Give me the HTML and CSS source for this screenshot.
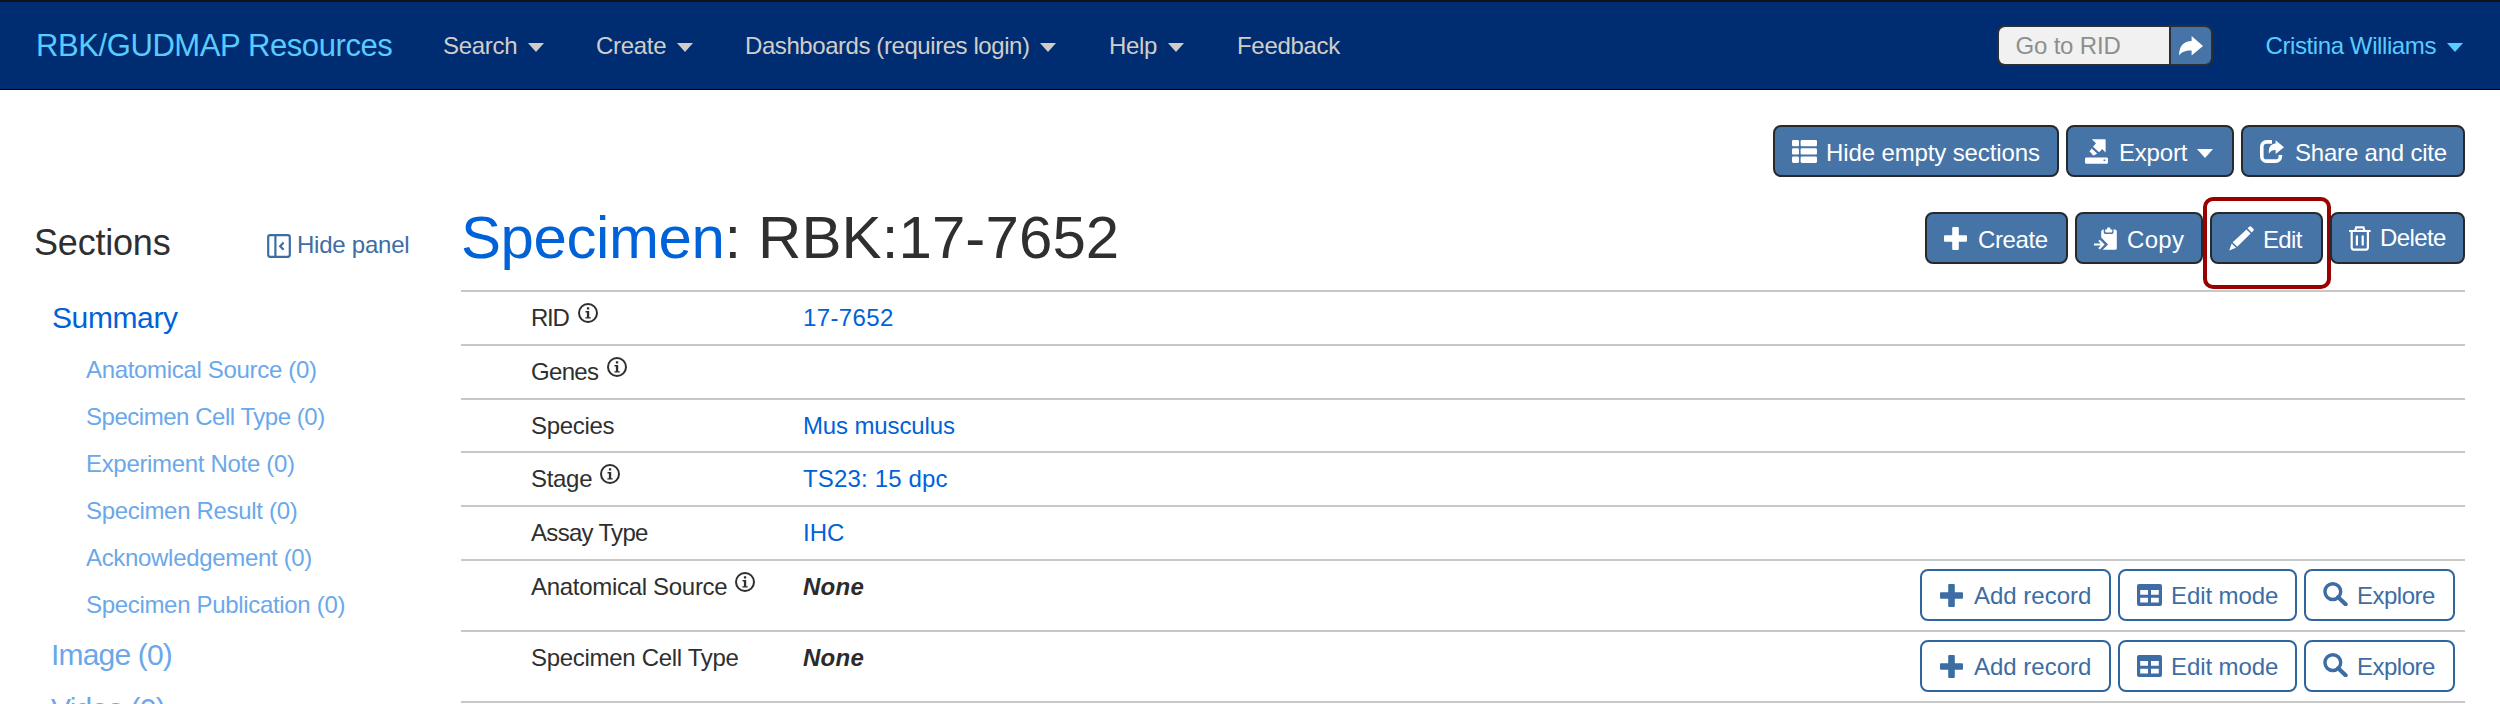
FILE: index.html
```html
<!DOCTYPE html>
<html lang="en">
<head>
<meta charset="utf-8">
<title>Specimen: RBK:17-7652</title>
<link rel="stylesheet" href="styles.css">
</head>
<body>
<svg class="defs" width="0" height="0">
  <symbol id="i-list" viewBox="0 0 25 23"><g fill="currentColor"><rect x="0" y="0" width="7" height="6.3" rx="1.3"/><rect x="0" y="8.3" width="7" height="6.3" rx="1.3"/><rect x="0" y="16.6" width="7" height="6.3" rx="1.3"/><rect x="8.6" y="0" width="16.4" height="6.3" rx="1.3"/><rect x="8.6" y="8.3" width="16.4" height="6.3" rx="1.3"/><rect x="8.6" y="16.6" width="16.4" height="6.3" rx="1.3"/></g></symbol>
  <symbol id="i-export" viewBox="0 0 23 25"><path fill="currentColor" d="M6.800.3h13.800v13.200l-3.400-3.400-3.100 3.100-6.100-5.400L11 4.200zM6.600 9.400l5.600 5-3.400 2-1.800-.8-.6-1.500-2-1.300z"/><path fill="currentColor" fill-rule="evenodd" d="M.8 18.600h21.400l.8.8v4.600l-.8.8H.8l-.8-.8v-4.600zM18.600 20.600v1.400h1.700v-1.400z"/></symbol>
  <symbol id="i-share" viewBox="0 0 24 23"><path fill="none" stroke="currentColor" stroke-width="3.600" d="M12 1.900H6.500a4.700 4.700 0 0 0-4.700 4.700v9.800a4.700 4.700 0 0 0 4.700 4.700h9.200a4.700 4.700 0 0 0 4.700-4.700v-1.400"/><path fill="currentColor" d="M15.600.2v3.400C10.500 4.100 8.300 7.600 8.900 13.700c1.600-3.100 3.700-3.800 6.700-3.800v4L24 7.200z"/></symbol>
  <symbol id="i-plus" viewBox="0 0 23 23"><path fill="currentColor" d="M9.200 0h4.600q1 0 1 1v7.200h7.200q1 0 1 1v4.600q0 1-1 1h-7.200v7.200q0 1-1 1H9.200q-1 0-1-1v-7.200H1q-1 0-1-1V9.200q0-1 1-1h7.200V1q0-1 1-1z"/></symbol>
  <symbol id="i-copy" viewBox="0 0 23 23"><path fill="currentColor" d="M8.700 2.600h1v2.700q0 1.600 1.600 1.600h6.600q1.600 0 1.600-1.600V2.600h1.600q1.700 0 1.700 1.700v17q0 1.500-1.500 1.500H8.700l5.400-5.300L7.200 10.500V4.300z"/><path fill="currentColor" d="M11.200 2.400h1.500q.4-2.200 2-2.200t2 2.200h1.600v2q0 1-1 1h-5.100q-1 0-1-1z"/><path fill="none" stroke="currentColor" stroke-width="2" d="M0 17.600h8M5 13.400l4.200 4.200L5 21.800"/></symbol>
  <symbol id="i-pencil" viewBox="0 0 25 25"><path fill="currentColor" d="M17.500 3.400l4.100 4.100L8.200 20.700l-4.500-4.500zM2.700 17.500l4.300 4.300L.2 24.600zM18.600 2.300L20.200.7q1-1 2 0l2.100 2.100q1 1 0 2l-1.600 1.600z"/></symbol>
  <symbol id="i-trash" viewBox="0 0 22 25"><path fill="none" stroke="currentColor" stroke-width="2.200" d="M0 5h21.600M6 5L7.200 1.400h7.200L15.600 5M2.700 5v16.600q0 2 2 2h12.200q2 0 2-2V5M7.900 9.400v10M13.700 9.400v10"/></symbol>
  <symbol id="i-table" viewBox="0 0 25 22"><path fill="currentColor" fill-rule="evenodd" d="M2 0h21q2 0 2 2v18q0 2-2 2H2q-2 0-2-2V2q0-2 2-2zM3.200 6v4.800h7.800V6zM14 6v4.800h7.800V6zM3.200 13.800v4.800h7.800v-4.800zM14 13.800v4.800h7.800v-4.800z"/></symbol>
  <symbol id="i-search" viewBox="0 0 25 24"><g fill="none" stroke="currentColor"><circle cx="9.800" cy="9.600" r="7.900" stroke-width="3.400"/><path d="M15.200 15.200l7.400 7" stroke-width="4.200" stroke-linecap="round"/></g></symbol>
  <symbol id="i-panel" viewBox="0 0 24 24"><path fill="none" stroke="currentColor" stroke-width="2.200" d="M3.200 1.200h17.600q2 0 2 2v17.600q0 2-2 2H3.200q-2 0-2-2V3.200q0-2 2-2zM8.400 1v22M16.600 8.600l-3.400 3.600 3.400 3.600"/></symbol>
  <symbol id="i-go" viewBox="0 0 24 20"><path fill="currentColor" d="M12.600 0v5C4.500 5.300.2 10 0 19.500 2.800 15.800 6.300 14.400 12.600 14.500v5L24 9.900z"/></symbol>
  <symbol id="i-info" viewBox="0 0 20 20"><circle cx="10" cy="10" r="9" fill="none" stroke="currentColor" stroke-width="2"/><path fill="currentColor" d="M8.900 4.300h2.300v2.300H8.900zM7.500 8h3.700v6.200h1.500v1.400H7.400v-1.400h1.500V9.400H7.500z"/></symbol>
</svg>

<header class="navbar">
  <a class="brand">RBK/GUDMAP Resources</a>
  <nav class="menu">
    <a class="menu-item">Search<i class="caret"></i></a>
    <a class="menu-item">Create<i class="caret"></i></a>
    <a class="menu-item tight">Dashboards (requires login)<i class="caret"></i></a>
    <a class="menu-item">Help<i class="caret"></i></a>
    <a class="menu-item">Feedback</a>
  </nav>
  <form class="goto">
    <span class="goto-field">Go to RID</span>
    <span class="goto-button"><svg width="24" height="20"><use href="#i-go"/></svg></span>
  </form>
  <a class="user">Cristina Williams<i class="caret"></i></a>
</header>

<div class="page">
  <aside class="sidebar">
    <div class="sidebar-head">
      <h2>Sections</h2>
      <a class="hide-panel"><svg width="24" height="24"><use href="#i-panel"/></svg>Hide panel</a>
    </div>
    <a class="toc-main active">Summary</a>
    <div class="toc-sub">
      <a>Anatomical Source (0)</a>
      <a class="tight">Specimen Cell Type (0)</a>
      <a>Experiment Note (0)</a>
      <a>Specimen Result (0)</a>
      <a>Acknowledgement (0)</a>
      <a>Specimen Publication (0)</a>
    </div>
    <a class="toc-main">Image (0)</a>
    <a class="toc-main">Video (0)</a>
  </aside>

  <main class="record">
    <div class="toolbar">
      <a class="btn w-hide"><svg width="25" height="23"><use href="#i-list"/></svg><span>Hide empty sections</span></a>
      <a class="btn w-export"><svg width="23" height="25"><use href="#i-export"/></svg><span>Export</span><i class="caret"></i></a>
      <a class="btn w-share"><svg width="24" height="23"><use href="#i-share"/></svg><span>Share and cite</span></a>
    </div>
    <div class="title-row">
      <h1><a>Specimen</a>: RBK:17-7652</h1>
      <div class="toolbar">
        <a class="btn w-create"><svg width="23" height="23"><use href="#i-plus"/></svg><span>Create</span></a>
        <a class="btn w-copy"><svg width="23" height="23"><use href="#i-copy"/></svg><span>Copy</span></a>
        <a class="btn w-edit"><svg width="25" height="25"><use href="#i-pencil"/></svg><span>Edit</span><b class="highlight"></b></a>
        <a class="btn w-delete"><svg width="22" height="25"><use href="#i-trash"/></svg><span>Delete</span></a>
      </div>
    </div>
    <div class="fields">
      <div class="row"><div class="key k-rid">RID<svg width="20" height="20"><use href="#i-info"/></svg></div><a class="value digits">17-7652</a></div>
      <div class="row"><div class="key k-genes">Genes<svg width="20" height="20"><use href="#i-info"/></svg></div></div>
      <div class="row"><div class="key">Species</div><a class="value">Mus musculus</a></div>
      <div class="row"><div class="key">Stage<svg width="20" height="20"><use href="#i-info"/></svg></div><a class="value stage">TS23: 15 dpc</a></div>
      <div class="row"><div class="key k-assay">Assay Type</div><a class="value ihc">IHC</a></div>
      <div class="row tall"><div class="key">Anatomical Source<svg width="20" height="20"><use href="#i-info"/></svg></div><div class="value none">None</div>
        <div class="actions">
          <a class="btn outline w-add"><svg width="23" height="23"><use href="#i-plus"/></svg><span>Add record</span></a>
          <a class="btn outline w-mode"><svg width="25" height="22"><use href="#i-table"/></svg><span>Edit mode</span></a>
          <a class="btn outline w-explore"><svg width="25" height="24"><use href="#i-search"/></svg><span>Explore</span></a>
        </div></div>
      <div class="row tall last"><div class="key">Specimen Cell Type</div><div class="value none">None</div>
        <div class="actions">
          <a class="btn outline w-add"><svg width="23" height="23"><use href="#i-plus"/></svg><span>Add record</span></a>
          <a class="btn outline w-mode"><svg width="25" height="22"><use href="#i-table"/></svg><span>Edit mode</span></a>
          <a class="btn outline w-explore"><svg width="25" height="24"><use href="#i-search"/></svg><span>Explore</span></a>
        </div></div>
    </div>
  </main>
</div>
</body>
</html>
```
FILE: styles.css
```css
* { box-sizing: border-box; }
html, body { margin: 0; height: 704px; overflow: hidden; background: #fff; }
body {
  font: 24px/28px "Liberation Sans", Arial, sans-serif;
  letter-spacing: -0.3px;
  color: #2f2f2f;
  white-space: nowrap;
}
.defs { display: block; position: absolute; }
svg { flex: none; display: block; }
h1, h2 { margin: 0; font-weight: 400; }

.caret {
  flex: none;
  width: 0;
  height: 0;
  border: 8.500px solid transparent;
  border-top: 9px solid currentColor;
  border-bottom: 0;
}

/* top bar */
.navbar {
  display: flex;
  align-items: center;
  height: 90px;
  padding: 0 37px 0 36px;
  background: #002d72;
  border-top: 2px solid #101418;
  border-bottom: 1px solid #000010;
}
.brand { width: 407px; font-size: 31px; line-height: 36px; letter-spacing: -0.41px; color: #5bcaff; }
.menu { display: grid; grid-template-columns: 153px 149px 364px 128px auto; color: #d0cdca; }
.menu-item, .user { display: flex; align-items: center; gap: 11px; }
.menu .caret, .user .caret { margin-top: 4px; }
.menu-item.tight { letter-spacing: -0.43px; gap: 10px; }
.goto { display: flex; width: 216px; height: 41px; margin: 0 52px 0 auto; border: 2px solid #2b2f33; border-radius: 8px; overflow: hidden; }
.goto-field { flex: none; width: 170px; padding: 5px 0 0 16px; background: #f1f1f1; color: #8e8e8e; letter-spacing: -0.17px; }
.goto-button { flex: 1; display: flex; align-items: center; justify-content: center; background: #4674a7; border-left: 2px solid #2b2f33; color: #fff; }
.user { color: #5bcaff; letter-spacing: -0.4px; gap: 11px; }

/* page columns */
.page { display: flex; height: 614px; overflow: hidden; }
.sidebar { width: 461px; padding: 133px 0 0 34px; }
.sidebar-head { display: flex; height: 68px; }
.sidebar h2 { width: 233px; font-size: 36px; line-height: 40px; letter-spacing: -0.2px; }
.hide-panel { display: flex; align-items: flex-start; gap: 6px; padding-top: 8px; color: #3d6da3; letter-spacing: -0.24px; }
.hide-panel svg { margin-top: 3px; }
.toc-main { display: block; padding-left: 17px; font-size: 30px; line-height: 54px; letter-spacing: -0.82px; color: #6ba8ea; }
.toc-main.active { padding-left: 18px; color: #0062d8; letter-spacing: -0.39px; padding-bottom: 2px; }
.toc-sub { padding-left: 52px; height: 281px; color: #6ba8ea; letter-spacing: -0.32px; }
.toc-sub a { display: block; line-height: 46.950px; }
.toc-sub .tight { letter-spacing: -0.47px; }

.record { width: 2004px; padding-top: 35px; }
.toolbar { display: flex; justify-content: flex-end; gap: 7px; }
.title-row { display: flex; justify-content: space-between; height: 113px; padding-top: 26px; }
.title-row .toolbar { padding-top: 9px; }
h1 { font-size: 60px; line-height: 70px; letter-spacing: 0.1px; }
h1 a { color: #0062d8; letter-spacing: -0.42px; }

/* buttons */
.btn {
  position: relative;
  display: flex;
  align-items: center;
  height: 52px;
  padding-left: 17px;
  background: #4674a7;
  border: 2px solid #262a2d;
  border-radius: 8px;
  color: #fff;
  letter-spacing: -0.2px;
}
.btn span { padding-top: 4px; }
.w-hide { width: 286px; gap: 9px; letter-spacing: -0.12px; }
.w-export { width: 168px; gap: 10px; }
.w-export span { padding-left: 1px; }
.w-export .caret { margin: 5px 0 0 0; }
.w-share { width: 224px; gap: 11px; }
.w-create { width: 143px; gap: 11px; letter-spacing: -0.4px; }
.w-copy { width: 128px; gap: 10px; letter-spacing: 0.32px; }
.w-edit { width: 113px; gap: 9px; letter-spacing: -0.66px; }
.w-delete { width: 135px; gap: 9px; letter-spacing: -0.61px; }
.w-delete span { padding-top: 0; }
.highlight { position: absolute; left: -9px; top: -17px; width: 128px; height: 92px; border: 4px solid #990000; border-radius: 10px; }

/* record fields */
.row { display: flex; height: 53.840px; border-top: 2px solid #c8c8c8; }
.row.tall { height: 71.200px; }
.row.last { height: 73px; border-bottom: 2px solid #c8c8c8; }
.key { display: flex; flex: none; width: 342px; padding: 12px 0 0 70px; gap: 8px; }
.key svg { margin-top: -1px; }
.k-rid { letter-spacing: -1.25px; gap: 9px; }
.k-genes { letter-spacing: -0.68px; gap: 9px; }
.k-assay { letter-spacing: -0.69px; }
.value { padding-top: 12px; color: #0062d8; letter-spacing: -0.13px; }
.digits { letter-spacing: 0.38px; }
.stage { letter-spacing: 0.16px; }
.ihc { letter-spacing: 0; }
.none { font-weight: 700; font-style: italic; color: #2b2b2b; letter-spacing: 0.28px; }
.actions { display: flex; gap: 7px; margin: 8px 10px 0 auto; }
.outline { background: #fff; border-color: #2f659f; color: #3d6da3; }
.outline span { padding-top: 2px; }
.w-add { width: 191px; gap: 11px; letter-spacing: 0; padding-left: 18px; }
.w-mode { width: 179px; gap: 9px; letter-spacing: -0.09px; }
.w-explore { width: 151px; gap: 9px; letter-spacing: -0.5px; }
.w-explore svg { margin-top: -2px; }
```
